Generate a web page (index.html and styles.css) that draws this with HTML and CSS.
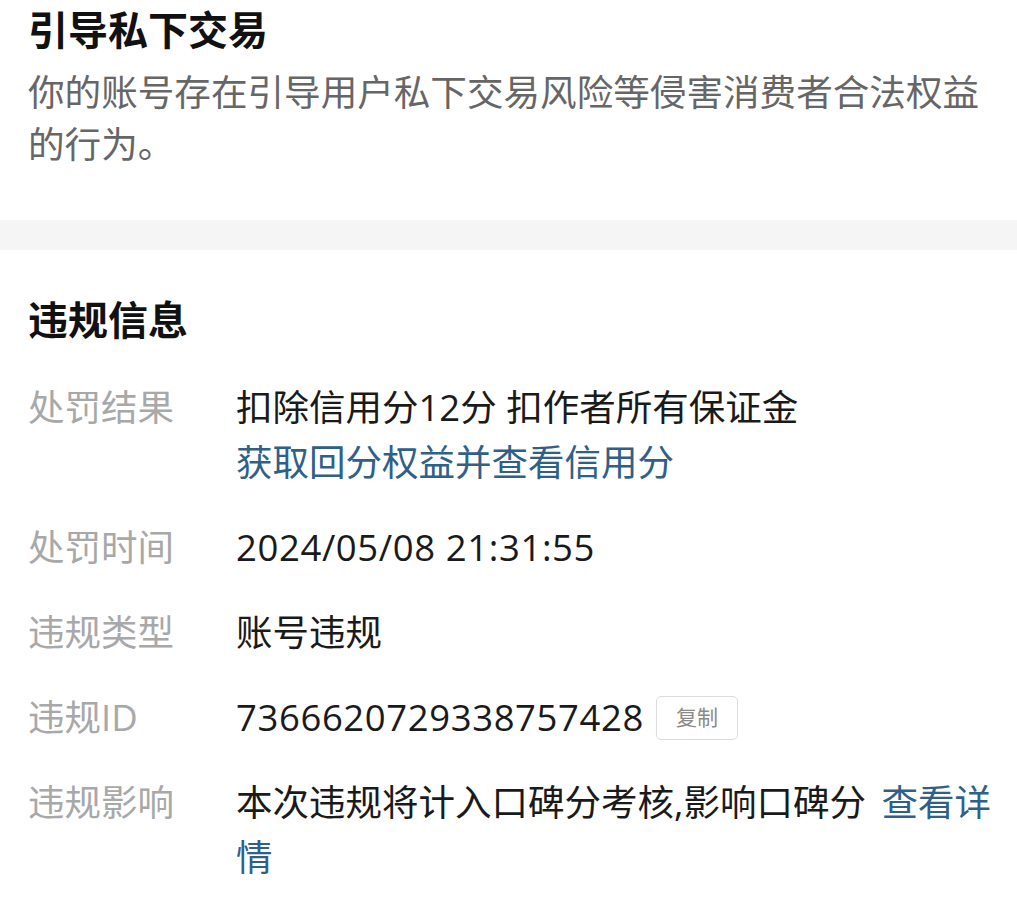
FILE: index.html
```html
<!DOCTYPE html>
<html lang="zh-CN">
<head>
<meta charset="utf-8">
<title>违规信息</title>
<link rel="stylesheet" href="styles.css">
</head>
<body>
<section class="notice">
  <h1 class="notice-title">引导私下交易</h1>
  <p class="notice-desc">你的账号存在引导用户私下交易风险等侵害消费者合法权益的行为。</p>
</section>
<div class="divider"></div>
<section class="info">
  <h2 class="info-title">违规信息</h2>
  <div class="rows">
    <div class="row">
      <div class="label">处罚结果</div>
      <div class="value">扣除信用分12分 扣作者所有保证金<span class="link block">获取回分权益并查看信用分</span></div>
    </div>
    <div class="row">
      <div class="label">处罚时间</div>
      <div class="value"><span class="num">2024/05/08 21:31:55</span></div>
    </div>
    <div class="row">
      <div class="label">违规类型</div>
      <div class="value">账号违规</div>
    </div>
    <div class="row">
      <div class="label">违规ID</div>
      <div class="value id-line"><span class="num">7366620729338757428</span><span class="copy">复制</span></div>
    </div>
    <div class="row">
      <div class="label">违规影响</div>
      <div class="value">本次违规将计入口碑分考核,影响口碑分 <span class="link gap">查看详情</span></div>
    </div>
  </div>
</section>
</body>
</html>
```

FILE: styles.css
```css
html, body {
  margin: 0;
  padding: 0;
  background: #ffffff;
}

body {
  font-family: "Open Sans", "Noto Sans CJK SC", sans-serif;
  color: #1c1c1c;
  width: 1017px;
}

.notice {
  padding: 2px 20px 47px 28px;
}

.notice-title {
  margin: 0;
  font-size: 40px;
  font-weight: 700;
  line-height: 56px;
  color: #111111;
}

.notice-desc {
  margin: 8px 0 3px 0;
  font-size: 36.6px;
  line-height: 52px;
  color: #666666;
}

.divider {
  height: 30px;
  background: #f5f5f5;
}

.info {
  padding: 42px 20px 0 28px;
}

.info-title {
  margin: 0;
  font-size: 40px;
  font-weight: 700;
  line-height: 56px;
  color: #111111;
}

.rows {
  margin-top: 32px;
  display: flex;
  flex-direction: column;
  gap: 30px;
}

.row {
  display: grid;
  grid-template-columns: 208px 1fr;
  font-size: 36.5px;
  line-height: 55px;
}

.label {
  color: #a8a8a8;
}

.value {
  color: #1a1a1a;
}

.link {
  color: #2f6088;
}

.link.block {
  display: block;
}

.link.gap {
  margin-left: 6px;
}

.num {
  letter-spacing: 0.6px;
}

.id-line {
  display: flex;
  align-items: center;
  gap: 12px;
}

.copy {
  display: inline-flex;
  align-items: center;
  justify-content: center;
  width: 80px;
  height: 42px;
  border: 1px solid #dcdcdc;
  border-radius: 5px;
  font-size: 21px;
  line-height: 1;
  color: #8a8a8a;
}
```
